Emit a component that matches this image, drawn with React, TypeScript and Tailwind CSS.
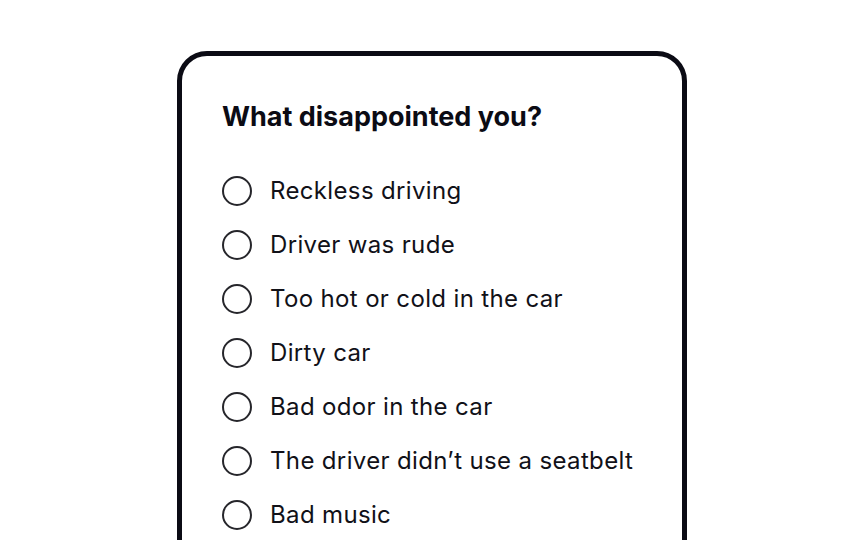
const reasons = [
  "Reckless driving",
  "Driver was rude",
  "Too hot or cold in the car",
  "Dirty car",
  "Bad odor in the car",
  "The driver didn’t use a seatbelt",
  "Bad music",
];

const App = () => {
  return (
    <div
      className="h-[540px] w-[864px] overflow-hidden bg-white"
      style={{ fontFamily: "Inter, 'Noto Sans', sans-serif" }}
    >
      <div className="mx-auto mt-[51px] w-[510px] rounded-[30px] border-[5px] border-[#0b0b14] bg-white px-10 pt-[45px] pb-10">
        <h2 className="text-[27px] font-bold leading-8 text-[#0b0b14]">
          What disappointed you?
        </h2>

        <div className="mt-[43px] flex flex-col gap-[24px]">
          {reasons.map((r) => (
            <label key={r} className="flex items-center gap-[18px]">
              <span className="h-[30px] w-[30px] shrink-0 rounded-full border-2 border-[#26262b]" />
              <span className="text-[24px] leading-[30px] tracking-[0.35px] text-[#111118]">
                {r}
              </span>
            </label>
          ))}
        </div>
      </div>
    </div>
  );
};

export default App;
